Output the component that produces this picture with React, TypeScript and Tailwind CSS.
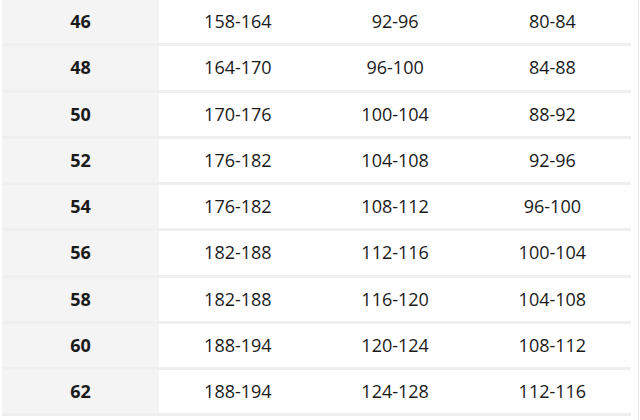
import React from "react";

const rows = [
  ["46", "158-164", "92-96", "80-84"],
  ["48", "164-170", "96-100", "84-88"],
  ["50", "170-176", "100-104", "88-92"],
  ["52", "176-182", "104-108", "92-96"],
  ["54", "176-182", "108-112", "96-100"],
  ["56", "182-188", "112-116", "100-104"],
  ["58", "182-188", "116-120", "104-108"],
  ["60", "188-194", "120-124", "108-112"],
  ["62", "188-194", "124-128", "112-116"],
];

export default function App() {
  return (
    <div
      className="w-[640px] h-[420px] bg-white flex overflow-hidden text-[#1a1a1a]"
      style={{ fontFamily: '"Open Sans", "Noto Sans", sans-serif' }}
    >
      <div className="w-[2px] bg-white" />
      <div className="w-[629px] flex flex-col">
        {rows.map((r) => (
          <div
            key={r[0]}
            className="grid grid-cols-4 h-[46.25px] shrink-0 border-b-[3px] border-[#efefef] text-[18px]"
          >
            <div className="bg-[#f4f4f4] flex items-center justify-center font-bold">
              {r[0]}
            </div>
            <div className="flex items-center justify-center">{r[1]}</div>
            <div className="flex items-center justify-center">{r[2]}</div>
            <div className="flex items-center justify-center">{r[3]}</div>
          </div>
        ))}
      </div>
      <div className="w-[7px] bg-white" />
      <div className="w-[1px] bg-[#e8e8e8]" />
      <div className="flex-1 bg-white" />
    </div>
  );
}
